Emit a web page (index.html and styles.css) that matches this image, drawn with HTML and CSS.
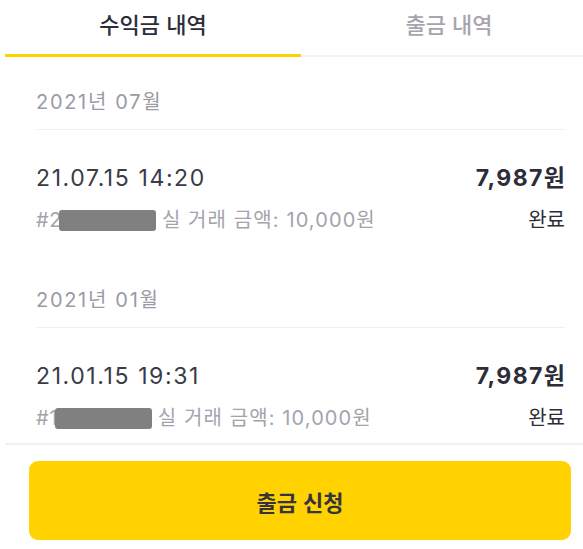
FILE: index.html
```html
<!DOCTYPE html>
<html lang="ko">
<head>
<meta charset="utf-8">
<link rel="stylesheet" href="styles.css">
</head>
<body>
<div class="app">
  <div class="tabs">
    <div class="tab active">수익금 내역</div>
    <div class="tab">출금 내역</div>
  </div>
  <div class="list">
    <section class="section">
      <div class="month">2021년 07월</div>
      <div class="row">
        <div class="line main">
          <span class="date">21.07.15 14:20</span>
          <span class="amount">7,987원</span>
        </div>
        <div class="line sub">
          <span class="meta"><span class="id">#2</span><span class="mask"></span> 실 거래 금액: 10,000원</span>
          <span class="status">완료</span>
        </div>
      </div>
    </section>
    <section class="section">
      <div class="month">2021년 01월</div>
      <div class="row">
        <div class="line main">
          <span class="date">21.01.15 19:31</span>
          <span class="amount">7,987원</span>
        </div>
        <div class="line sub">
          <span class="meta"><span class="id">#1</span><span class="mask"></span> 실 거래 금액: 10,000원</span>
          <span class="status">완료</span>
        </div>
      </div>
    </section>
  </div>
  <div class="footer">
    <button class="cta">출금 신청</button>
  </div>
</div>
</body>
</html>
```

FILE: styles.css
```css
html, body {
  margin: 0;
  padding: 0;
  background: #ffffff;
  overflow: hidden;
}
body {
  font-family: "Noto Sans CJK KR", "Noto Sans", sans-serif;
  color: #33343f;
}
.app {
  margin-left: 5px;
  width: 592px;
  height: 549px;
  display: flex;
  flex-direction: column;
}
.tabs {
  display: flex;
  height: 57px;
  flex: none;
}
.tab {
  flex: 1;
  display: flex;
  align-items: center;
  justify-content: center;
  padding-bottom: 9px;
  box-sizing: border-box;
  font-size: 22px;
  font-weight: 500;
  color: #a6a5ae;
  border-bottom: 2px solid #f3f3f7;
}
.tab.active {
  color: #2c2d38;
  border-bottom: 3px solid #ffd200;
}
.list {
  flex: 1;
  overflow: hidden;
  padding: 0 32px 0 31px;
  font-family: "Inter", "Noto Sans CJK KR", sans-serif;
}
.section {
  padding-top: 31px;
}
.month {
  font-size: 20px;
  line-height: 29px;
  letter-spacing: 1.7px;
  color: #9c9aa5;
  padding-bottom: 12px;
  border-bottom: 1px solid #f0f0f3;
}
.row {
  padding: 33px 0 21px;
}
.line {
  display: flex;
  justify-content: space-between;
  align-items: center;
}
.main {
  line-height: 30px;
  font-size: 23px;
}
.date {
  color: #3a3b47;
  letter-spacing: 1.6px;
}
.amount {
  font-weight: 700;
  color: #2c2d38;
  letter-spacing: 1.4px;
  margin-right: -1.4px;
}
.sub {
  margin-top: 13px;
  line-height: 28px;
  font-size: 20px;
}
.meta {
  color: #a4a3ac;
  display: flex;
  align-items: center;
  letter-spacing: 1.1px;
}
.id {
  letter-spacing: 0.5px;
}
.mask {
  display: inline-block;
  width: 97px;
  height: 21px;
  margin-left: -3px;
  margin-right: 6px;
  background: #808080;
  border-radius: 3px;
}
.status {
  color: #2c2d38;
}
.footer {
  flex: none;
  height: 106px;
  box-sizing: border-box;
  border-top: 2px solid #f1f1f4;
  padding: 16px 26px 0 24px;
}
.cta {
  display: block;
  width: 100%;
  height: 79px;
  border: none;
  border-radius: 9px;
  background: #ffd200;
  font-family: "Noto Sans CJK KR", "Noto Sans", sans-serif;
  font-size: 22px;
  font-weight: 700;
  color: #33343f;
  padding: 0;
}
```
